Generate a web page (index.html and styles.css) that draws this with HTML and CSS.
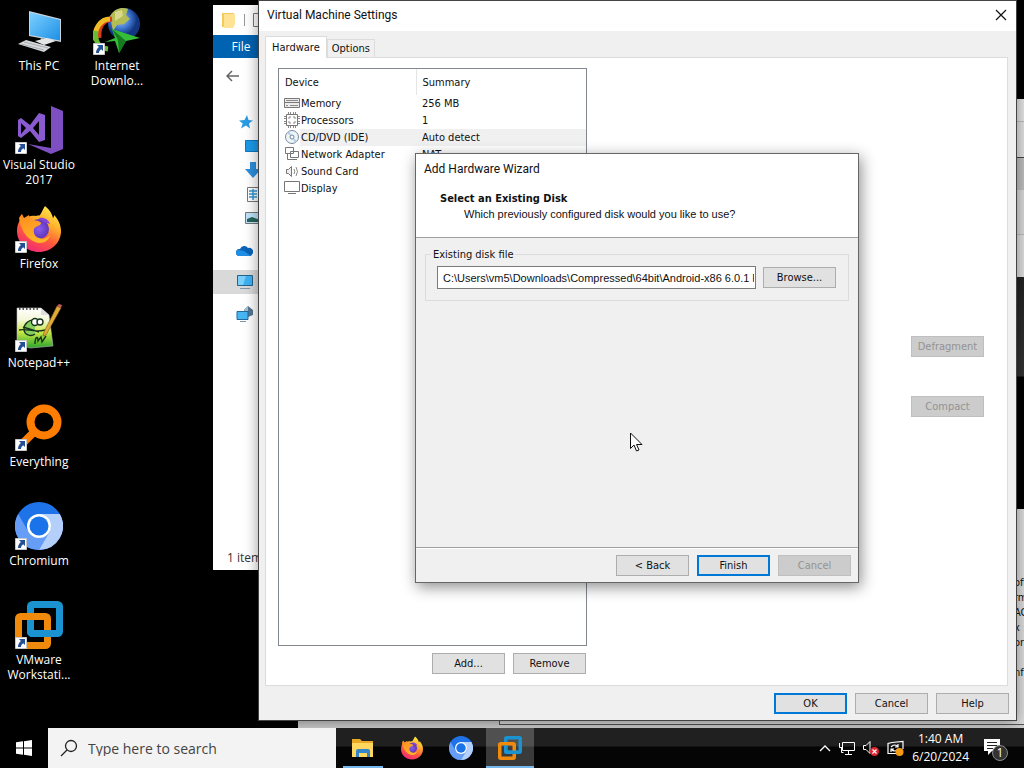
FILE: index.html
```html
<!DOCTYPE html>
<html lang="en">
<head>
<meta charset="utf-8">
<title>Desktop</title>
<link rel="stylesheet" href="styles.css">
</head>
<body>
<svg class="defs" aria-hidden="true">
  <defs>
    <linearGradient id="ffBody" x1="0.8" y1="0" x2="0.3" y2="1">
      <stop offset="0" stop-color="#fff04a"/><stop offset="0.35" stop-color="#ffb02c"/><stop offset="0.65" stop-color="#ff5a3c"/><stop offset="1" stop-color="#f0267a"/>
    </linearGradient>
    <linearGradient id="ffTail" x1="0" y1="0" x2="0.4" y2="1">
      <stop offset="0" stop-color="#ff8a1e"/><stop offset="1" stop-color="#ffb52a"/>
    </linearGradient>
    <radialGradient id="ffGlobe"><stop offset="0" stop-color="#8b5cf0"/><stop offset="1" stop-color="#5f35b8"/></radialGradient>
    <linearGradient id="screen" x1="0" y1="0" x2="1" y2="1"><stop offset="0" stop-color="#7cd0ff"/><stop offset="1" stop-color="#1d8fe6"/></linearGradient>
    <radialGradient id="earth" cx="0.4" cy="0.35"><stop offset="0" stop-color="#a9cdf5"/><stop offset="0.6" stop-color="#3d74cf"/><stop offset="1" stop-color="#12357f"/></radialGradient>
    <linearGradient id="npp" x1="0" y1="0" x2="0" y2="1"><stop offset="0" stop-color="#fff"/><stop offset="0.3" stop-color="#f4f7d8"/><stop offset="0.6" stop-color="#c8e848"/><stop offset="1" stop-color="#2ba52b"/></linearGradient>
    <symbol id="firefox" viewBox="0 0 48 48">
      <path fill="url(#ffBody)" d="M30 1c5 4 7 8 8 12 1-1 1-2 1-3 4 4 7 10 7 16 0 12-10 21-22 21S2 38 2 26c0-7 3-11 5-15 1 2 1 3 2 4 3-4 8-5 12-4 2-1 3 0 4-1 2-3 3-6 5-9z"/>
      <circle cx="24" cy="24" r="10" fill="url(#ffGlobe)"/>
      <path fill="url(#ffTail)" d="M4 13c1-2 2-3 3-4l2 4 5-3c0 2 1 4 3 5 3 0 8 1 9 3 0 3-6 3-7 6-1 4 1 8 5 9 4 2 8 0 11-3-1 6-8 10-15 7C10 33 6 24 4 13z"/>
      <path fill="#8545d8" d="M24 13c5-1 10 2 11 6-2-1-3-1-4-1-3-2-5-2-7-5z"/>
    </symbol>
    <symbol id="chromium" viewBox="0 0 48 48">
      <circle cx="24" cy="24" r="24" fill="#1f73e8"/>
      <path fill="#669df6" d="M3.200 12A24 24 0 0 0 24 48L34.400 30 24 36 13.600 30z"/>
      <path fill="#b4cffa" d="M44.800 12A24 24 0 0 1 24 48L34.400 30 36 24 24 12z"/>
      <circle cx="24" cy="24" r="12" fill="#fff"/>
      <circle cx="24" cy="24" r="9.500" fill="#1a73e8"/>
    </symbol>
    <symbol id="vmware" viewBox="0 0 48 48">
      <rect x="15.500" y="3.500" width="29" height="29" rx="2" fill="none" stroke="#1b93d0" stroke-width="7"/>
      <rect x="3.500" y="15.500" width="29" height="29" rx="2" fill="none" stroke="#f08a0c" stroke-width="7"/>
      <path d="M15.500 19v11.500a2 2 0 0 0 2 2H40" fill="none" stroke="#1b93d0" stroke-width="7"/>
    </symbol>
    <symbol id="shortcut" viewBox="0 0 12 12">
      <path fill="#fff" stroke="#c8c8c8" stroke-width="1" d="M.5.5h11v11H.5z"/>
      <path fill="#244f94" d="M4 2h6v6L8.200 6.200C6.500 7.500 6 8.500 6 10H3c0-2.500 1-4.500 2.900-6z"/>
    </symbol>
    <symbol id="pc" viewBox="0 0 18 16">
      <path fill="#3db1f2" stroke="#23638f" d="M1.500 1.500h15v10h-15z"/><path fill="#7ad0fb" d="M2 2h8L7 11H2z"/><path stroke="#7c96a8" d="M4 14.500h10"/>
    </symbol>
  </defs>
</svg>

<div class="screen">
  <main class="desktop">
    <nav class="shortcuts" aria-label="Desktop icons">
      <a class="shortcut" href="#pc">
        <svg viewBox="0 0 48 48"><path fill="#c9d3da" d="M14 4l32 8v23L14 29z"/><path fill="url(#screen)" d="M15 5.500l30 7.500v20.500L15 28z"/><path fill="#b9bec2" d="M26 31l5 1v4l-6-1z"/><path fill="#e3e5e7" d="M20 34l12-3 9 3-12 4z"/><path fill="#d8dadc" d="M3 37l8-4 25 7-7 5z"/><path stroke="#9ca1a6" stroke-width=".8" d="M6 37l23 6M9 35l24 6"/></svg>
        <span>This PC</span>
      </a>
      <a class="shortcut" href="#vs">
        <svg viewBox="0 0 48 48"><path fill="#7d4fc0" d="M36 0l12 5v38l-12 5L13 38l23 4z"/><path fill="#8a5bcf" fill-rule="evenodd" d="M3 14l3-2 9 7 9-12 6 2v25l-6 2-9-11-9 7-3-2zM6 17v11l5-6zM24 15l-6 7 6 7z"/><use href="#shortcut" y="36" width="12" height="12"/></svg>
        <span>Visual Studio 2017</span>
      </a>
      <a class="shortcut" href="#firefox">
        <svg viewBox="0 0 48 48"><use href="#firefox" width="48" height="48"/><use href="#shortcut" y="36" width="12" height="12"/></svg>
        <span>Firefox</span>
      </a>
      <a class="shortcut" href="#notepad">
        <svg viewBox="0 0 48 48"><path fill="url(#npp)" stroke="#bbb" stroke-width=".6" d="M2 4h24l8 7 4 31-23 2-13-4z"/><path fill="#ddd" d="M26 4v7h8z"/><path stroke="#555" stroke-width="2" stroke-dasharray="1.500 2" d="M4 5h21"/><g fill="none" stroke="#17321a" stroke-width="1.400"><path fill="#86cf5e" d="M20 16c-6-1-11 4-11 9 0 6 7 8 11 5"/><circle cx="20" cy="18" r="3.500" fill="#fff"/><circle cx="25" cy="18" r="3" fill="#fff"/><path d="M4 26c8-2 14 3 26 0M8 23l16 5M20 40c0-7 3-9 3-3l3-4 1 5 4-6"/></g><path fill="#e0ac37" stroke="#78531c" stroke-width=".6" d="M42 2l4 2-15 27-3 1 1-4z"/><path fill="#c85a50" d="M42 2l2-2 3 1-1 3z"/><use href="#shortcut" y="36" width="12" height="12"/></svg>
        <span>Notepad++</span>
      </a>
      <a class="shortcut" href="#everything">
        <svg viewBox="0 0 48 48"><path stroke="#ff7d00" stroke-width="8" d="M20 28L8 40"/><circle cx="29" cy="19" r="13.500" fill="none" stroke="#ff7d00" stroke-width="8"/><use href="#shortcut" y="36" width="12" height="12"/></svg>
        <span>Everything</span>
      </a>
      <a class="shortcut" href="#chromium">
        <svg viewBox="0 0 48 48"><use href="#chromium" width="48" height="48"/><use href="#shortcut" y="36" width="12" height="12"/></svg>
        <span>Chromium</span>
      </a>
      <a class="shortcut" href="#vmware">
        <svg viewBox="0 0 48 48"><use href="#vmware" width="48" height="48"/><use href="#shortcut" y="36" width="12" height="12"/></svg>
        <span>VMware Workstati...</span>
      </a>
      <a class="shortcut" href="#idm">
        <svg viewBox="0 0 48 48"><circle cx="31" cy="17" r="16" fill="url(#earth)"/><path fill="#b4bd55" d="M17 9c5-8 12-9 18-7l-2 6 4 4-6 5-7 1-4 6z"/><path fill="#d8d98b" d="M22 5l7-2 1 6-8 5z"/><g fill="none" stroke-width="5"><path stroke="#d63c1e" d="M19 12C10 13 5 20 6 31"/><path stroke="#f1bd25" d="M17 12C8 12 0 22 3 33"/><path stroke="#68bd2e" d="M3 24c-2 10 3 17 12 18"/></g><path fill="#36bd38" d="M19 22l28 9-14 3-7 12-4-12-10 1 10-4z"/><path fill="#157a20" d="M19 22l14 12-7 12-1-13z"/><use href="#shortcut" y="36" width="12" height="12"/></svg>
        <span>Internet Downlo...</span>
      </a>
    </nav>

    <section class="workstation" aria-label="VMware Workstation">
      <div class="ws-head"></div><div class="ws-menu"></div><div class="ws-tools"></div><div class="ws-tab"></div><div class="ws-view"></div><div class="ws-canvas"></div>
      <div class="ws-info"><p>oft</p><p>rm</p><p>AC</p><p>x :</p><p>or</p><p class="spaced">nf</p></div>
    </section>

    <section class="explorer" aria-label="File Explorer">
      <header class="quick">
        <svg width="14" height="17" viewBox="0 0 14 17"><path fill="#f5ca58" d="M0 1h12v14H0z"/><path fill="#ffe394" d="M2 2h11v10l-2 4H2z"/></svg>
        <i></i>
        <svg width="14" height="14" viewBox="0 0 14 14"><path fill="none" stroke="#777" d="M.5.5h13v13H.5z"/></svg>
      </header>
      <div class="ribbon"><button type="button">File</button></div>
      <div class="address">
        <svg width="14" height="12" viewBox="0 0 14 12"><path d="M13 6H1.500M6 1L1 6l5 5" fill="none" stroke="#666" stroke-width="1.500"/></svg>
      </div>
      <ul class="tree">
        <li class="star"><svg width="14" height="14" viewBox="0 0 14 14"><path fill="#2b9be4" d="M8 0l1.500 5L14 5.500 10 8.500l1 5-4-3-5 3 1.700-5L0 5.500 5.500 5z"/></svg></li>
        <li class="sub"><svg width="16" height="12" viewBox="0 0 16 12"><path fill="#1b9bea" stroke="#1175bd" d="M.5.5h15v11H.5z"/></svg></li>
        <li class="sub"><svg width="16" height="16" viewBox="0 0 16 16"><path fill="#2d8fdc" d="M5 0h6v7h5l-8 9-8-9h5z"/></svg></li>
        <li class="sub doc"><svg width="12" height="15" viewBox="0 0 12 15"><path fill="#fff" stroke="#777" d="M.5.5h11v14H.5z"/><path stroke="#3398d4" stroke-width="1.500" d="M2 4h8M2 7h8M2 10h8M6 2v11"/></svg></li>
        <li class="sub"><svg width="16" height="12" viewBox="0 0 16 12"><path fill="#bfe4fa" stroke="#777" d="M.5.5h15v11H.5z"/><path fill="#25655c" d="M2 7l5-2 8 3v2H2z"/></svg></li>
        <li class="gap"></li>
        <li><svg width="17" height="11" viewBox="0 0 17 11"><path fill="#0a64b8" d="M4 4a4.500 4.500 0 0 1 8-1 4 4 0 0 1 5 5l-2 3H3a3.500 3.500 0 0 1 1-7z"/><path fill="#1f8fe5" d="M3 11a3 3 0 0 1 0-6l5 1 7 5z"/></svg></li>
        <li class="gap"></li>
        <li class="current"><svg width="18" height="16"><use href="#pc"/></svg></li>
        <li class="gap"></li>
        <li><svg width="18" height="16" viewBox="0 0 18 16"><path fill="#55768f" d="M8 4l4-4 5 4v5l-5 2z"/><path fill="#a3bfd1" d="M8 4l4-4v7z"/><path fill="#47b6f4" stroke="#216a9c" d="M1 5.500h11v8H1z"/><path stroke="#7c96a8" d="M4 15.500h6"/></svg></li>
      </ul>
      <footer>1 item</footer>
    </section>

    <section class="settings" role="dialog" aria-label="Virtual Machine Settings">
      <header class="titlebar">
        <h1>Virtual Machine Settings</h1>
        <button class="close" type="button" aria-label="Close"><svg width="12" height="12" viewBox="0 0 12 12"><path d="M1 1l10 10M11 1L1 11" stroke="#111" stroke-width="1.200"/></svg></button>
      </header>
      <div class="tabs" role="tablist">
        <button type="button" role="tab" aria-selected="true">Hardware</button>
        <button type="button" role="tab" aria-selected="false">Options</button>
      </div>
      <div class="page">
        <div class="devices">
          <div class="list">
            <table>
              <thead><tr><th>Device</th><th>Summary</th></tr></thead>
              <tbody>
                <tr><td><svg viewBox="0 0 16 16"><path fill="#ececec" stroke="#777" d="M.5 3.500h15v4H.5zM.5 7.500h15v5H.5z"/><path stroke="#888" d="M2 5.500h12M2 10.500h2M6 10.500h8"/></svg>Memory</td><td>256 MB</td></tr>
                <tr><td><svg viewBox="0 0 16 16"><path stroke="#888" d="M4.500 0v16M6.500 0v16M9.500 0v16M11.500 0v16M0 4.500h16M0 6.500h16M0 9.500h16M0 11.500h16"/><path fill="#fff" stroke="#777" d="M2.500 2.500h11v11h-11z"/><path fill="none" stroke="#888" d="M5 7V5h2M9 5h2v2M11 9v2H9M7 11H5V9"/></svg>Processors</td><td>1</td></tr>
                <tr class="selected"><td><svg viewBox="0 0 16 16"><circle cx="8" cy="8" r="6.500" fill="#edf4fa" stroke="#7b8b9b"/><path fill="#b3cbe1" d="M8 8L3 4l2-2zM8 8l5 4-2 2z"/><circle cx="8" cy="8" r="2" fill="#fff" stroke="#6c879e"/></svg>CD/DVD (IDE)</td><td>Auto detect</td></tr>
                <tr><td><svg viewBox="0 0 16 16"><path fill="#fff" stroke="#777" d="M1.500 1.500h8v6h-8zM6.500 5.500h8v6h-8z"/><path fill="none" stroke="#777" d="M3.500 8v5.500H9M8 13.500h5"/></svg>Network Adapter</td><td>NAT</td></tr>
                <tr><td><svg viewBox="0 0 16 16"><path fill="#eee" stroke="#777" d="M2.500 6.500h2l3-3v10l-3-3h-2z"/><path fill="none" stroke="#888" d="M10 6q1.500 2.500 0 5M12 4q3 4.500 0 9"/></svg>Sound Card</td><td></td></tr>
                <tr><td><svg viewBox="0 0 16 16"><path fill="#fff" stroke="#777" d="M.5 1.500h15v10H.5z"/><path stroke="#777" d="M4 13.500h8"/></svg>Display</td><td></td></tr>
              </tbody>
            </table>
          </div>
          <div class="actions"><button class="btn" type="button">Add...</button><button class="btn" type="button">Remove</button></div>
        </div>
        <div class="utilities">
          <button class="btn" type="button" disabled>Defragment</button>
          <button class="btn" type="button" disabled>Compact</button>
        </div>
      </div>
      <footer class="actions confirm"><button class="btn default" type="button">OK</button><button class="btn" type="button">Cancel</button><button class="btn" type="button">Help</button></footer>

      <form class="wizard" role="dialog" aria-label="Add Hardware Wizard">
        <header>
          <h2>Add Hardware Wizard</h2>
          <h3>Select an Existing Disk</h3>
          <p>Which previously configured disk would you like to use?</p>
        </header>
        <div class="body">
          <fieldset>
            <legend><label for="disk">Existing disk file</label></legend>
            <div class="field">
              <input id="disk" type="text" value="C:\Users\vm5\Downloads\Compressed\64bit\Android-x86 6.0.1 R3">
              <button class="btn" type="button">Browse...</button>
            </div>
          </fieldset>
        </div>
        <footer class="actions"><button class="btn" type="button">&lt; Back</button><button class="btn default" type="button">Finish</button><button class="btn" type="button" disabled>Cancel</button></footer>
      </form>
    </section>

    <svg class="pointer" width="13" height="20" viewBox="0 0 13 20" aria-hidden="true"><path fill="#fff" stroke="#111" d="M.5 1v15.500L4 13l2.500 6 2.500-1-2.500-5.500H12z"/></svg>
  </main>

  <footer class="taskbar">
    <button class="start" type="button" aria-label="Start"><svg width="16" height="16" viewBox="0 0 16 16"><path fill="#fff" d="M0 2.300l7-1v6.200H0zM8 1.200L16 0v7.500H8zM0 8.500h7v6.200l-7-1zM8 8.500h8V16l-8-1.200z"/></svg></button>
    <label class="search">
      <svg width="18" height="18" viewBox="0 0 18 18"><circle cx="11" cy="7" r="5.500" fill="none" stroke="#222" stroke-width="1.300"/><path d="M7 11l-6 6" stroke="#222" stroke-width="1.300"/></svg>
      <input type="text" placeholder="Type here to search" aria-label="Type here to search">
    </label>
    <div class="apps">
      <button class="open" type="button" aria-label="File Explorer"><svg width="24" height="24" viewBox="0 0 24 24"><path fill="#e9a825" d="M1 3h8l2 2h11v16H1z"/><path fill="#ffd65e" d="M1 7h21v14H1z"/><path fill="#3585c9" d="M5 21v-6a2 2 0 0 1 2-2h10a2 2 0 0 1 2 2v6h-3v-4H8v4z"/></svg></button>
      <button type="button" aria-label="Firefox"><svg width="24" height="24"><use href="#firefox"/></svg></button>
      <button type="button" aria-label="Chromium"><svg width="24" height="24"><use href="#chromium"/></svg></button>
      <button class="open active" type="button" aria-label="VMware"><svg width="24" height="24"><use href="#vmware"/></svg></button>
    </div>
    <div class="tray">
      <svg width="12" height="8" viewBox="0 0 12 8"><path d="M1 7l5-5 5 5" fill="none" stroke="#fff" stroke-width="1.300"/></svg>
      <svg width="16" height="16" viewBox="0 0 16 16"><path fill="none" stroke="#fff" d="M3.500 2.500h12v8h-12zM.5 3v4.500h3M2.500 8v4.500h2M9.500 11v3M6 14.500h7"/></svg>
      <svg width="16" height="16" viewBox="0 0 16 16"><path fill="none" stroke="#fff" d="M.5 5.500H3l4-4v12l-4-4H.5z"/><circle cx="11.500" cy="11.500" r="4.500" fill="#dc2431"/><path stroke="#fff" stroke-width="1.200" d="M9.500 9.500l4 4m0-4l-4 4"/></svg>
      <svg width="17" height="16" viewBox="0 0 17 16"><path fill="none" stroke="#fff" stroke-width="1.200" d="M10 13.500H1v-10l4-1 11-1V9M4 7q4-4 7 0M11 4v3H8M11 9q-3 4-7 0M4 12V9h3"/><circle cx="12.500" cy="12" r="4" fill="#f59a18"/></svg>
      <time datetime="2024-06-20T01:40">1:40 AM<br>6/20/2024</time>
      <svg class="notice" width="26" height="26" viewBox="0 0 26 26"><path fill="#fff" d="M1 4h16v12H9l-4 4v-4H1z"/><path stroke="#222" stroke-width="1.200" d="M4 7.500h10M4 10.500h10M4 13.500h6"/><circle cx="17" cy="18" r="7.500" fill="#333" stroke="#8a8a8a"/><text x="17" y="22" text-anchor="middle">1</text></svg>
    </div>
  </footer>
</div>
</body>
</html>
```
FILE: styles.css
```css
* { box-sizing: border-box; }

body {
  margin: 0;
  background: #000;
  color: #111;
  font: 11px/15px "DejaVu Sans Condensed", "DejaVu Sans", sans-serif;
}

h1, h2, h3, p, ul { margin: 0; padding: 0; font-weight: normal; }
ul { list-style: none; }
button, input { font: inherit; color: inherit; }
button { padding: 0; border: 0; background: none; }
svg { flex: none; }

.defs { position: absolute; width: 0; height: 0; }

.screen { display: flex; flex-direction: column; height: 100vh; }
.desktop { position: relative; flex: 1; min-height: 0; overflow: hidden; }

/* Desktop icons */
.shortcuts {
  display: grid;
  grid-auto-flow: column;
  grid-template-rows: repeat(7, 99px);
  grid-auto-columns: 78px;
  justify-content: start;
}
.shortcut {
  display: flex;
  flex-direction: column;
  align-items: center;
  gap: 3px;
  padding-top: 7px;
  color: #fff;
  font: 12px/15px "Open Sans", sans-serif;
  text-align: center;
  text-decoration: none;
}
.shortcut svg { width: 48px; height: 48px; }

/* Workstation window behind the dialogs */
.workstation {
  position: absolute;
  inset: 99px 0 0 298px;
  display: flex;
  flex-direction: column;
  background: #cfcfcf;
}
.ws-head { height: 23px; background: #e4e4e4; border-bottom: 1px solid #bbb; }
.ws-menu { height: 36px; background: #e0e0e0; border-bottom: 1px solid #444; }
.ws-tools { height: 32px; background: #bebebe; }
.ws-tab { height: 45px; background: #d8d8d8; border-bottom: 1px solid #bbb; }
.ws-view { height: 42px; background: #dedede; }
.ws-canvas { height: 232px; background: linear-gradient(#222, #333 99px, #000 100px); }
.ws-info {
  flex: 1;
  margin: 0 0 3px 201px;
  padding: 66px 0 0 514px;
  border: solid #555;
  border-width: 0 0 1px 1px;
  background: #dcdcdc;
  white-space: nowrap;
  overflow: hidden;
}
.ws-info .spaced { margin-top: 15px; }

/* File explorer */
.explorer {
  position: absolute;
  inset: 5px 300px 158px 213px;
  display: flex;
  flex-direction: column;
  background: #fff;
  font: 12px/15px "Open Sans", sans-serif;
}
.quick { display: flex; align-items: center; gap: 8px; height: 30px; padding-left: 9px; }
.quick i { width: 1px; height: 12px; background: #999; }
.ribbon { height: 23px; background: #0063b1; color: #fff; }
.ribbon button { width: 56px; height: 23px; }
.address { display: flex; align-items: center; height: 36px; padding-left: 13px; }
.tree { flex: 1; padding-top: 16px; }
.tree li { display: flex; align-items: center; height: 24px; padding-left: 23px; }
.tree .star { padding-left: 26px; }
.tree .sub { padding-left: 32px; }
.tree .doc { padding-left: 34px; }
.tree .gap { height: 8px; }
.tree .current { background: #d9d9d9; }
.explorer footer { height: 24px; padding: 4px 0 0 14px; color: #333; }

/* Settings dialog */
.settings {
  position: absolute;
  inset: 1px 8px 8px 259px;
  display: flex;
  flex-direction: column;
  background: #f0f0f0;
  box-shadow: 0 0 0 1px #444, 0 2px 14px rgba(0, 0, 0, 0.45);
}
.titlebar {
  display: flex;
  justify-content: space-between;
  align-items: center;
  height: 30px;
  padding: 0 9px 2px 8px;
  background: #fff;
}
.titlebar h1, .wizard h2 { font: 12px/16px Roboto, sans-serif; }
.close { display: flex; }
.tabs { display: flex; align-items: flex-end; height: 26px; padding-left: 6px; }
.tabs button { height: 18px; padding: 0 4px; border: 1px solid #dcdcdc; border-bottom: 0; }
.tabs button[aria-selected="true"] {
  height: 22px;
  margin-bottom: -1px;
  padding: 0 6px;
  background: #fff;
  z-index: 1;
}
.page {
  flex: 1;
  display: flex;
  justify-content: space-between;
  margin: 0 8px 0 6px;
  padding: 10px 23px 11px 12px;
  border: 1px solid #dcdcdc;
  background: #fff;
}
.devices { display: flex; flex-direction: column; width: 309px; }
.list { flex: 1; border: 1px solid #828790; padding-left: 5px; }
.list table { width: 100%; border-collapse: collapse; table-layout: fixed; }
.list th { height: 26px; padding: 0 0 0 1px; font-weight: normal; text-align: left; }
.list th:first-child { width: 132px; }
.list th + th { padding-left: 6px; border-left: 1px solid #e5e5e5; }
.list td { height: 17px; padding: 0; line-height: 17px; }
.list td + td { padding-left: 6px; }
.list td svg { width: 16px; height: 16px; margin-right: 1px; vertical-align: top; }
.list .selected { background: linear-gradient(90deg, transparent 16px, #f0f0f0 16px); }

.actions { display: flex; justify-content: flex-end; gap: 8px; }
.devices .actions { padding: 7px 1px 0 0; }
.confirm { height: 34px; padding: 7px 7px 0; }

.btn { width: 73px; height: 21px; border: 1px solid #adadad; background: #e1e1e1; }
.btn.default { border: 2px solid #0078d7; }
.btn:disabled { border-color: #bfbfbf; background: #ccc; color: #939393; }

.utilities { display: flex; flex-direction: column; gap: 39px; padding-top: 268px; }

/* Wizard dialog */
.wizard {
  position: absolute;
  inset: 152px 157px 137px 156px;
  display: flex;
  flex-direction: column;
  border: 1px solid #666;
  background: #f0f0f0;
  box-shadow: 2px 4px 14px rgba(0, 0, 0, 0.45);
}
.wizard header {
  height: 84px;
  padding: 7px 8px 0;
  border-bottom: 1px solid #a0a0a0;
  background: #fff;
}
.wizard h3 { margin-top: 14px; padding-left: 16px; font: bold 11px/15px "DejaVu Sans Condensed", sans-serif; }
.wizard p { padding-left: 40px; font: 11px/17px "Liberation Sans", sans-serif; }
.wizard .body { flex: 1; padding: 9px 9px 0; }
.wizard fieldset { margin: 0; padding: 4px 12px 11px 11px; border: 1px solid #dcdcdc; }
.wizard legend { margin-left: -6px; padding: 0 2px; }
.field { display: flex; align-items: center; gap: 7px; }
.field input {
  flex: 1;
  min-width: 0;
  height: 23px;
  padding: 0 1px 0 5px;
  border: 1px solid #7a7a7a;
  background: #fff;
  font-family: "Liberation Sans", sans-serif;
}
.wizard footer { height: 35px; padding: 7px 7px 0; border-top: 1px solid #a0a0a0; box-shadow: inset 0 1px #fff; }

.pointer { position: absolute; left: 630px; top: 432px; }

/* Taskbar */
.taskbar {
  display: flex;
  height: 40px;
  background: linear-gradient(#202020 18px, #050505 19px);
  color: #fff;
  font-family: "Open Sans", sans-serif;
}
.start { display: flex; align-items: center; justify-content: center; width: 48px; background: #000; }
.search {
  display: flex;
  align-items: center;
  gap: 10px;
  width: 288px;
  padding: 0 12px;
  background: #f3f3f3;
}
.search input { flex: 1; min-width: 0; padding: 0; border: 0; background: none; font-size: 14px; }
.search input::placeholder { color: #444; opacity: 1; }
.apps { display: flex; gap: 1px; margin-left: 3px; }
.apps button { display: flex; align-items: center; justify-content: center; width: 48px; }
.apps .open { background: linear-gradient(#76b9ed, #76b9ed) center bottom / 40px 2px no-repeat; }
.apps .active { background: linear-gradient(#76b9ed, #76b9ed) bottom / 100% 2px no-repeat, linear-gradient(#505050 18px, #3a3a3a 19px); }
.tray { display: flex; align-items: center; gap: 8px; margin-left: auto; padding-right: 15px; }
.tray time { font-size: 12px; line-height: 18px; text-align: center; }
.tray .notice { margin-left: 6px; }
.notice text { fill: #fff; font-size: 12px; }
```
